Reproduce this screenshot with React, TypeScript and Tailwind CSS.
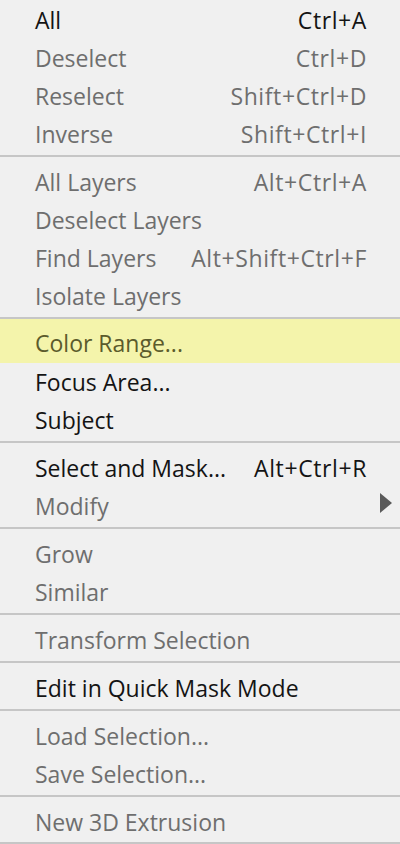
import React from "react";

type Item = {
  label: string;
  shortcut?: string;
  enabled?: boolean;
  highlighted?: boolean;
  submenu?: boolean;
};

// groups are divided by separators
const GROUPS: Item[][] = [
  [
    { label: "All", shortcut: "Ctrl+A", enabled: true },
    { label: "Deselect", shortcut: "Ctrl+D" },
    { label: "Reselect", shortcut: "Shift+Ctrl+D" },
    { label: "Inverse", shortcut: "Shift+Ctrl+I" },
  ],
  [
    { label: "All Layers", shortcut: "Alt+Ctrl+A" },
    { label: "Deselect Layers" },
    { label: "Find Layers", shortcut: "Alt+Shift+Ctrl+F" },
    { label: "Isolate Layers" },
  ],
  [
    { label: "Color Range...", enabled: true, highlighted: true },
    { label: "Focus Area...", enabled: true },
    { label: "Subject", enabled: true },
  ],
  [
    { label: "Select and Mask...", shortcut: "Alt+Ctrl+R", enabled: true },
    { label: "Modify", submenu: true },
  ],
  [{ label: "Grow" }, { label: "Similar" }],
  [{ label: "Transform Selection" }],
  [{ label: "Edit in Quick Mask Mode", enabled: true }],
  [{ label: "Load Selection..." }, { label: "Save Selection..." }],
  [{ label: "New 3D Extrusion" }],
];

function MenuRow({ item }: { item: Item }) {
  const color = item.highlighted
    ? "text-[#5b5b2c]"
    : item.enabled
      ? "text-[#141414]"
      : "text-[#6e6e6e]";

  return (
    <div
      className={`flex items-center pl-[35px] pr-[8px] ${color} ${
        item.highlighted ? "h-[44px] pt-[4px] bg-[#f4f4ab]" : "h-[38px]"
      }`}
    >
      <span className="whitespace-nowrap">{item.label}</span>
      <span className="flex-1" />
      {item.shortcut && (
        <span className="whitespace-nowrap tracking-[0.6px]">{item.shortcut}</span>
      )}
      <span className="flex w-[25px] justify-end">
        {item.submenu && (
          <svg width="12" height="20" viewBox="0 0 12 20" className="-mt-[6px]">
            <polygon points="0,0 12,10 0,20" fill="#5a5a5a" />
          </svg>
        )}
      </span>
    </div>
  );
}

function Separator({ tight }: { tight?: boolean }) {
  return <div className={`mt-[2px] h-[2px] bg-[#c6c6c6] ${tight ? "mb-0" : "mb-[6px]"}`} />;
}

export default function App() {
  return (
    <div
      className="h-[844px] w-[400px] overflow-hidden bg-[#f0f0f0] pt-[1px] text-[23px] leading-none"
      style={{ fontFamily: '"Open Sans", "Noto Sans", sans-serif' }}
    >
      {GROUPS.map((group, gi) => (
        <div key={gi}>
          {gi > 0 && <Separator tight={group[0].highlighted} />}
          {group.map((item) => (
            <MenuRow key={item.label} item={item} />
          ))}
        </div>
      ))}
      <div className="mt-[1px] h-[2px] bg-[#c6c6c6]" />
    </div>
  );
}
